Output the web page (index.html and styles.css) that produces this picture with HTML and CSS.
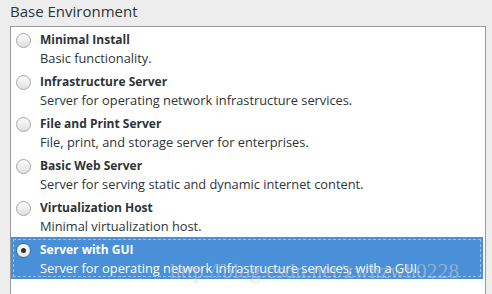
FILE: index.html
```html
<!DOCTYPE html>
<html>
<head>
    <title>Base Environment</title>
    <link rel="stylesheet" href="styles.css">
</head>
<body>
    <div class="env-panel">
        <h2 class="env-title">Base Environment</h2>
        <div class="env-list">
            <div class="env-row">
                <span class="radio"></span>
                <div class="env-text">
                    <div class="env-name">Minimal Install</div>
                    <div class="env-desc">Basic functionality.</div>
                </div>
            </div>
            <div class="env-row">
                <span class="radio"></span>
                <div class="env-text">
                    <div class="env-name">Infrastructure Server</div>
                    <div class="env-desc">Server for operating network infrastructure services.</div>
                </div>
            </div>
            <div class="env-row">
                <span class="radio"></span>
                <div class="env-text">
                    <div class="env-name">File and Print Server</div>
                    <div class="env-desc">File, print, and storage server for enterprises.</div>
                </div>
            </div>
            <div class="env-row">
                <span class="radio"></span>
                <div class="env-text">
                    <div class="env-name">Basic Web Server</div>
                    <div class="env-desc">Server for serving static and dynamic internet content.</div>
                </div>
            </div>
            <div class="env-row">
                <span class="radio"></span>
                <div class="env-text">
                    <div class="env-name">Virtualization Host</div>
                    <div class="env-desc">Minimal virtualization host.</div>
                </div>
            </div>
            <div class="env-row selected">
                <span class="radio checked"></span>
                <div class="env-text">
                    <div class="env-name">Server with GUI</div>
                    <div class="env-desc">Server for operating network infrastructure services, with a GUI.</div>
                </div>
            </div>
        </div>
    </div>
    <div class="watermark">http://blog.csdn.net/zwhzwh0228</div>
</body>
</html>
```

FILE: styles.css
```css
body {
    margin: 0;
    padding: 0;
    background-color: #ededed;
    font-family: 'Open Sans', 'DejaVu Sans', sans-serif;
    color: #2e3436;
    height: 294px;
    overflow: hidden;
    position: relative;
}

.env-panel {
    padding: 0 6px 0 10px;
}

.env-title {
    font-size: 15px;
    font-weight: 400;
    line-height: 20px;
    margin: 1px 0 5px 0;
    color: #2e3436;
}

.env-list {
    background-color: #fff;
    border: 1px solid #9a9a9a;
    height: 300px;
    padding: 0;
}

.env-row {
    display: flex;
    align-items: flex-start;
    height: 42px;
    box-sizing: border-box;
    padding: 4px 0 2px 5px;
}

.env-row.selected {
    background-color: #4a90d9;
    color: #fff;
    outline: 1px dashed rgba(255, 255, 255, 0.45);
    outline-offset: -3px;
    margin-right: 2px;
}

.radio {
    width: 13px;
    height: 13px;
    border-radius: 50%;
    border: 1px solid #a8a8a8;
    background: linear-gradient(#fcfcfc, #e0e0e0);
    margin: 2px 9px 0 0;
    flex-shrink: 0;
    position: relative;
}

.radio.checked {
    border-color: #3a6ea5;
    background: linear-gradient(#ffffff, #e8e8e8);
}

.radio.checked::after {
    content: "";
    position: absolute;
    width: 5px;
    height: 5px;
    border-radius: 50%;
    background-color: #2e3436;
    left: 4px;
    top: 4px;
}

.env-name {
    font-size: 12px;
    font-weight: 700;
    line-height: 18px;
}

.env-desc {
    font-size: 12.8px;
    line-height: 18px;
}

.watermark {
    position: absolute;
    left: 170px;
    top: 259px;
    font-family: 'Liberation Serif', serif;
    font-size: 21px;
    color: rgba(205, 205, 205, 0.55);
    white-space: nowrap;
    letter-spacing: 0.3px;
}
```
